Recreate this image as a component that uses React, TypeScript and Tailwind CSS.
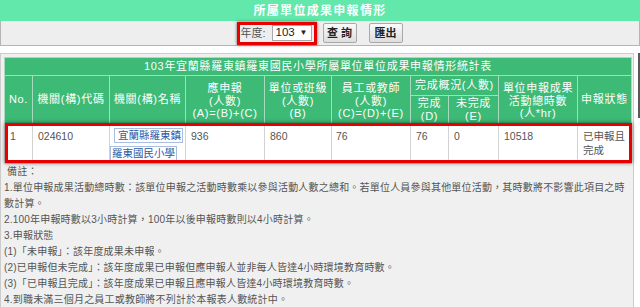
import React from "react";

const headBorder = "border border-[#a7dbbd]";
const cellBorder = "border border-[#d2d2d2]";

export default function App() {
    const notes = [
        "1.單位申報成果活動總時數：該單位申報之活動時數乘以參與活動人數之總和。若單位人員參與其他單位活動，其時數將不影響此項目之時數計算。",
        "2.100年申報時數以3小時計算，100年以後申報時數則以4小時計算。",
        "3.申報狀態",
        "(1)「未申報」：該年度成果未申報。",
        "(2)已申報但未完成」：該年度成果已申報但應申報人並非每人皆達4小時環境教育時數。",
        "(3)「已申報且完成」：該年度成果已申報且應申報人皆達4小時環境教育時數。",
        "4.到職未滿三個月之員工或教師將不列計於本報表人數統計中。",
    ];

    return (
        <div className="relative w-[640px] h-[307px] overflow-hidden bg-white font-['Liberation_Sans','Noto_Sans_CJK_TC',sans-serif]">
            {/* page title */}
            <div className="h-[21px] bg-[#62e8ab] flex items-center justify-center text-white font-bold text-[12px] tracking-[1.3px]">
                所屬單位成果申報情形
            </div>

            {/* toolbar */}
            <div className="h-[25px] bg-[#eeeeee] border-x border-b border-[#b4b4b4] flex items-center justify-center">
                <div className="relative flex items-center h-[23px] pl-[3px] pr-[5px] gap-[6px]">
                    <span className="text-[11px] text-[#555]">年度:</span>
                    <div className="w-[40px] h-[16px] bg-white border border-[#a8a8a8] flex items-center justify-between px-[3px] text-[11.5px] text-[#222]">
                        <span>103</span>
                        <span className="text-[8px]">▼</span>
                    </div>
                    <span className="absolute inset-0 border-[3px] border-[#e60000] shadow-[0_0_3px_rgba(0,0,0,0.6)]" />
                </div>
                <button className="ml-[6px] w-[34px] h-[20px] rounded-[2px] border border-[#a9a9a9] bg-gradient-to-b from-[#fafafa] to-[#dedede] text-[11px] text-[#222] font-bold">
                    查 詢
                </button>
                <button className="ml-[12px] w-[34px] h-[20px] rounded-[2px] border border-[#a9a9a9] bg-gradient-to-b from-[#fafafa] to-[#dedede] text-[11px] text-[#222] font-bold">
                    匯出
                </button>
            </div>

            {/* report */}
            <div className="mt-[7px] w-[634px] h-[270px] border border-[#cccccc] bg-[#f0f0f0] pl-[3px] pr-[2px] pt-[3px]">
                <div className="relative">
                    <table className="table-fixed border-collapse w-[627px] text-white text-[11px] tracking-[0.7px]">
                        <colgroup>
                            <col className="w-[28px]" />
                            <col className="w-[77px]" />
                            <col className="w-[76px]" />
                            <col className="w-[79px]" />
                            <col className="w-[67px]" />
                            <col className="w-[79px]" />
                            <col className="w-[38px]" />
                            <col className="w-[50px]" />
                            <col className="w-[79px]" />
                            <col className="w-[54px]" />
                        </colgroup>
                        <thead className="bg-[#3dba76] leading-[12.5px]">
                            <tr className="h-[18px]">
                                <th colSpan={10} className={`${headBorder} font-normal`}>
                                    103年宜蘭縣羅東鎮羅東國民小學所屬單位單位成果申報情形統計表
                                </th>
                            </tr>
                            <tr className="h-[20px]">
                                <th rowSpan={2} className={`${headBorder} font-normal`}>No.</th>
                                <th rowSpan={2} className={`${headBorder} font-normal`}>機關(構)代碼</th>
                                <th rowSpan={2} className={`${headBorder} font-normal`}>機關(構)名稱</th>
                                <th rowSpan={2} className={`${headBorder} font-normal pt-[3px]`}>
                                    應申報<br />(人數)<br />(A)=(B)+(C)
                                </th>
                                <th rowSpan={2} className={`${headBorder} font-normal pt-[3px]`}>
                                    單位或班級<br />(人數)<br />(B)
                                </th>
                                <th rowSpan={2} className={`${headBorder} font-normal pt-[3px]`}>
                                    員工或教師<br />(人數)<br />(C)=(D)+(E)
                                </th>
                                <th colSpan={2} className={`${headBorder} font-normal`}>完成概況(人數)</th>
                                <th rowSpan={2} className={`${headBorder} font-normal pt-[3px]`}>
                                    單位申報成果<br />活動總時數<br />(人*hr)
                                </th>
                                <th rowSpan={2} className={`${headBorder} font-normal`}>申報狀態</th>
                            </tr>
                            <tr className="h-[28px]">
                                <th className={`${headBorder} font-normal`}>完成<br />(D)</th>
                                <th className={`${headBorder} font-normal`}>未完成<br />(E)</th>
                            </tr>
                        </thead>
                        <tbody className="bg-white text-[#555] text-[10.5px] tracking-normal leading-[14px] text-left align-top">
                            <tr className="h-[40px]">
                                <td className={`${cellBorder} pl-[5px] pt-[5px]`}>1</td>
                                <td className={`${cellBorder} pl-[5px] pt-[5px]`}>024610</td>
                                <td className={`${cellBorder} pt-[4px]`}>
                                    <div className="flex flex-col items-start gap-[3px] text-[#2b5aa8] leading-[13px]">
                                        <span className="ml-[4px] border border-[#a9bde0] pl-[3px] pr-[1px]">宜蘭縣羅東鎮</span>
                                        <span className="ml-[0px] border border-[#a9bde0] px-[1px]">羅東國民小學</span>
                                    </div>
                                </td>
                                <td className={`${cellBorder} pl-[5px] pt-[5px]`}>936</td>
                                <td className={`${cellBorder} pl-[5px] pt-[5px]`}>860</td>
                                <td className={`${cellBorder} pl-[4px] pt-[5px]`}>76</td>
                                <td className={`${cellBorder} pl-[5px] pt-[5px]`}>76</td>
                                <td className={`${cellBorder} pl-[5px] pt-[5px]`}>0</td>
                                <td className={`${cellBorder} pl-[5px] pt-[5px]`}>10518</td>
                                <td className={`${cellBorder} pl-[5px] pt-[5px]`}>已申報且<br />完成</td>
                            </tr>
                        </tbody>
                    </table>
                    <span className="absolute left-[1px] top-[66px] w-[627px] h-[40px] border-[3px] border-[#e60000] shadow-[0_0_4px_rgba(0,0,0,0.55)]" />
                </div>

                <div className="text-[10px] tracking-[0.2px] leading-[16px] text-[#555] pr-[2px]">
                    <div className="ml-[3px]">備註：</div>
                    {notes.map((note) => (
                        <div key={note}>{note}</div>
                    ))}
                </div>
            </div>

            <span className="absolute right-0 top-[53px] w-[2px] h-[65px] bg-[#5a5a5a]" />
        </div>
    );
}
